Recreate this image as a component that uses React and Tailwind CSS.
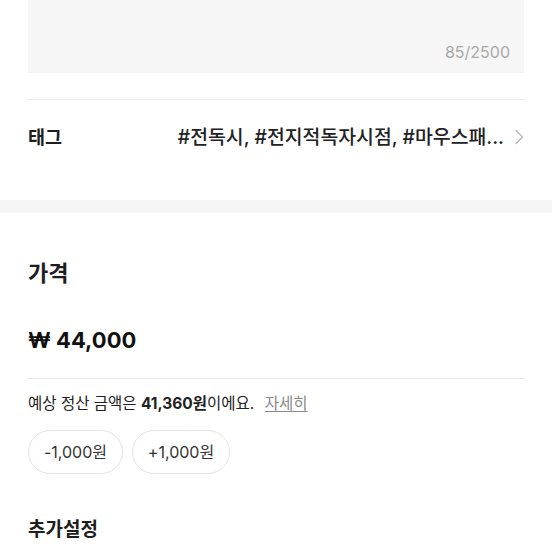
const font = { fontFamily: 'Inter, "Noto Sans CJK KR", sans-serif' };

const ChevronRight = () => (
  <svg width="10" height="16" viewBox="0 0 10 16" fill="none">
    <path d="M2 1.5L8.5 8L2 14.5" stroke="#b8b8b8" strokeWidth="1.4" strokeLinecap="round" strokeLinejoin="round" />
  </svg>
);

const App = () => {
  return (
    <div className="min-h-[552px] w-[552px] overflow-hidden bg-white text-[#1e1e1e]" style={font}>
      <div className="px-[28px]">
        <div className="flex h-[73px] items-end justify-end bg-[#f6f6f6] pb-[11px] pr-[14px]">
          <span className="text-[16px] leading-[20px] text-[#a9a9a9]">85/2500</span>
        </div>
        <div className="mt-[26px] h-px bg-[#e9e9e9]" />
        <div className="mt-[25px] flex h-[24px] items-center justify-between">
          <span className="text-[18.5px] font-bold leading-[24px]">태그</span>
          <div className="flex items-center gap-[10px]">
            <span className="text-[19.4px] font-medium leading-[24px] text-[#222]">
              #전독시, #전지적독자시점, #마우스패...
            </span>
            <ChevronRight />
          </div>
        </div>
      </div>

      <div className="mt-[51px] h-[13px] bg-[#f5f5f5]" />

      <div className="px-[28px]">
        <h2 className="mt-[48px] text-[22px] font-bold leading-[24px]">가격</h2>
        <div className="mt-[41px] text-[22px] font-bold leading-[28px] text-[#111]">₩ 44,000</div>
        <div className="mt-[24px] h-px bg-[#e9e9e9]" />
        <p className="mt-[14px] text-[15.5px] leading-[22px] text-[#222]">
          예상 정산 금액은 <span className="font-bold">41,360원</span>이에요.{" "}
          <span className="ml-[6px] text-[#8a8a8a] underline underline-offset-2">자세히</span>
        </p>
        <div className="mt-[15px] flex gap-[9px]">
          <button type="button" className="h-[44px] w-[95px] rounded-full border border-[#e3e3e3] text-[16px] text-[#333]">
            -1,000원
          </button>
          <button type="button" className="h-[44px] w-[98px] rounded-full border border-[#e3e3e3] text-[16px] text-[#333]">
            +1,000원
          </button>
        </div>
        <h2 className="mt-[44px] text-[19px] font-bold leading-[24px]">추가설정</h2>
      </div>
    </div>
  );
};

export default App;
